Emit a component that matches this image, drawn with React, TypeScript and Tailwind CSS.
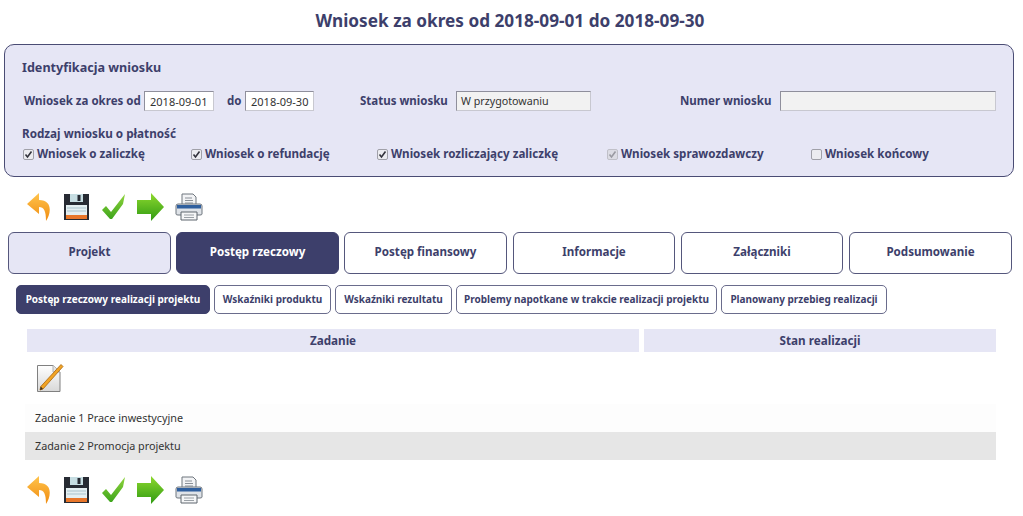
import React from "react";

function BackIcon() {
  return (
    <svg width="26" height="30" viewBox="0 0 26 30">
      <defs>
        <linearGradient id="bk" x1="0" y1="0" x2="0" y2="1">
          <stop offset="0" stopColor="#ffc44d" />
          <stop offset="1" stopColor="#f08c10" />
        </linearGradient>
      </defs>
      <path d="M13 1 L1 12 L13 22 L13 15 C18 15 20 19 20 29 C25 22 27 8 13 8 Z" fill="url(#bk)" />
    </svg>
  );
}
function SaveIcon() {
  return (
    <svg width="27" height="28" viewBox="0 0 27 28">
      <path d="M1 1 H26 V27 H1 Z" fill="#272b33" />
      <rect x="7" y="1" width="13" height="8" fill="#c6dde2" />
      <rect x="14.5" y="2" width="3" height="6" fill="#272b33" />
      <rect x="3" y="12" width="21" height="10" fill="#e4eff2" />
      <path d="M4 15 H23 M4 18 H23" stroke="#a9c3cc" strokeWidth="1" />
      <rect x="3" y="22" width="21" height="4" fill="#e8762a" />
    </svg>
  );
}
function CheckIcon() {
  return (
    <svg width="24" height="26" viewBox="0 0 24 26">
      <defs>
        <linearGradient id="ck" x1="0" y1="0" x2="0" y2="1">
          <stop offset="0" stopColor="#8fd43c" />
          <stop offset="1" stopColor="#3ea51c" />
        </linearGradient>
      </defs>
      <path d="M0 16 L4 12 L9 18 L23 0 L21 10 L10 25 L8 25 Z" fill="url(#ck)" />
    </svg>
  );
}
function NextIcon() {
  return (
    <svg width="29" height="29" viewBox="0 0 29 29">
      <defs>
        <linearGradient id="nx" x1="0" y1="0" x2="0" y2="1">
          <stop offset="0" stopColor="#8ed92f" />
          <stop offset="1" stopColor="#2f9a12" />
        </linearGradient>
      </defs>
      <path d="M1 7 H15 V0 L28 14 L15 28 V21 H1 Z" fill="url(#nx)" />
    </svg>
  );
}
function PrintIcon() {
  return (
    <svg width="28" height="28" viewBox="0 0 28 28">
      <path d="M7 1 H18 L21 4 V13 H7 Z" fill="#f2f3f5" stroke="#6f767e" />
      <path d="M10 5 H17 M10 7.5 H18 M10 10 H18" stroke="#8a9098" />
      <path d="M3 11 H25 Q27 11 27 13 V21 Q27 22 25 22 H3 Q1 22 1 21 V13 Q1 11 3 11 Z" fill="#dfe3e8" stroke="#6f767e" />
      <rect x="2" y="12" width="24" height="3.5" fill="#2f5f9e" />
      <path d="M6 19 H22 V27 H6 Z" fill="#f5f6f7" stroke="#5f666e" />
      <path d="M9 22 H19 M9 24.5 H19" stroke="#9aa0a6" />
    </svg>
  );
}
function Toolbar({ className }: { className: string }) {
  return (
    <div className={"flex items-center h-[30px] " + className}>
      <div className="w-[36px]"><BackIcon /></div>
      <div className="w-[40px] pl-px"><SaveIcon /></div>
      <div className="w-[34px]"><CheckIcon /></div>
      <div className="w-[39px]"><NextIcon /></div>
      <PrintIcon />
    </div>
  );
}
function PencilIcon() {
  return (
    <svg width="28" height="29" viewBox="0 0 28 29">
      <defs>
        <linearGradient id="pg" x1="0" y1="0" x2="0" y2="1">
          <stop offset="0" stopColor="#ffffff" />
          <stop offset="1" stopColor="#d8d8d8" />
        </linearGradient>
      </defs>
      <path d="M1.5 1.5 H17 L24 8 V27.5 H1.5 Z" fill="url(#pg)" stroke="#808080" />
      <path d="M17 1.5 V8 H24" fill="#e6e6e6" stroke="#b0b0b0" />
      <path d="M25 0.5 L27 2.5 L7 25 L4 26 L4.8 22.5 Z" fill="#f2a424" stroke="#a8640c" strokeWidth="0.8" />
      <path d="M4 26 L4.8 22.5 L7 25 Z" fill="#3a3026" />
    </svg>
  );
}
function Check({ label, checked, disabled, className }: { label: string; checked?: boolean; disabled?: boolean; className: string }) {
  return (
    <label className={"flex items-center font-bold " + className}>
      <span className={"flex items-center justify-center w-[11px] h-[11px] mr-[3px] rounded-[2px] border " + (disabled ? "border-[#c0c0c8] bg-[#dcdce4]" : "border-[#a0a0a8] bg-[#ececf0]")}>
        {checked && (
          <svg width="9" height="9" viewBox="0 0 9 9">
            <path d="M1.5 4.5 L3.5 7 L7.5 1.5" fill="none" stroke={disabled ? "#9a9aa2" : "#33333c"} strokeWidth="1.6" />
          </svg>
        )}
      </span>
      {label}
    </label>
  );
}
function Field({ value, className, gray }: { value: string; className: string; gray?: boolean }) {
  return (
    <div className={"h-[20px] border border-t-[#8f8f9c] border-l-[#8f8f9c] border-r-[#c8c8d0] border-b-[#c8c8d0] font-normal text-[#333] flex items-center leading-none whitespace-nowrap " + (gray ? "bg-[#f2f2f2] " : "bg-white ") + className}>
      {value}
    </div>
  );
}
const tabs = ["Projekt", "Postęp rzeczowy", "Postęp finansowy", "Informacje", "Załączniki", "Podsumowanie"];
const tabCls = [
  "w-[163px] bg-[#e6e6f5] text-[#3d3f6b] border-[#55577c] mr-[5px]",
  "w-[163px] bg-[#3d3f6b] text-white border-[#3d3f6b] mr-[5px]",
  "w-[163px] bg-white text-[#3d3f6b] border-[#55577c] mr-[6px]",
  "w-[162px] bg-white text-[#3d3f6b] border-[#55577c] mr-[6px]",
  "w-[162px] bg-white text-[#3d3f6b] border-[#55577c] mr-[6px]",
  "w-[163px] bg-white text-[#3d3f6b] border-[#55577c]",
];
const subs = [
  { t: "Postęp rzeczowy realizacji projektu", c: "w-[194px] bg-[#3d3f6b] text-white border-[#3d3f6b]" },
  { t: "Wskaźniki produktu", c: "w-[117px] bg-white text-[#3d3f6b] border-[#6a6c8c]" },
  { t: "Wskaźniki rezultatu", c: "w-[117px] bg-white text-[#3d3f6b] border-[#6a6c8c]" },
  { t: "Problemy napotkane w trakcie realizacji projektu", c: "w-[261px] bg-white text-[#3d3f6b] border-[#6a6c8c]" },
  { t: "Planowany przebieg realizacji", c: "w-[166px] bg-white text-[#3d3f6b] border-[#6a6c8c]" },
];

export default function App() {
  return (
    <div className="w-[1023px] h-[516px] bg-white overflow-hidden text-[#3d3f6b] text-[12px] font-['Noto_Sans',sans-serif]">
      <h1 className="h-[43px] pt-[9px] text-center text-[17.2px] leading-[24px] font-bold pr-[3px]">
        Wniosek za okres od 2018-09-01 do 2018-09-30
      </h1>
      <div className="ml-[4px] mt-px w-[1010px] h-[133px] rounded-[10px] border border-[#4a4c74] bg-[#e6e6f5] pl-[17px]">
        <div className="pt-[14px] h-[34px] text-[12.6px] leading-[18px] font-bold">Identyfikacja wniosku</div>
        <div className="flex items-center h-[20px] mt-[12px] font-bold text-[11.5px]">
          <span className="w-[122px] pl-[2px] whitespace-nowrap">Wniosek za okres od</span>
          <Field value="2018-09-01" className="w-[70px] pl-[5px] text-[11px]" />
          <span className="w-[31px] pl-[13px]">do</span>
          <Field value="2018-09-30" className="w-[69px] pl-[5px] text-[11px]" />
          <span className="w-[142px] pl-[46px] whitespace-nowrap">Status wniosku</span>
          <Field value="W przygotowaniu" className="w-[135px] pl-[4px] text-[10.7px]" gray />
          <span className="w-[189px] pl-[89px] whitespace-nowrap">Numer wniosku</span>
          <Field value="" className="w-[216px]" gray />
        </div>
        <div className="mt-[13px] h-[18px] leading-[18px] font-bold text-[11.7px]">Rodzaj wniosku o płatność</div>
        <div className="flex h-[18px] mt-[3px] text-[11.6px] whitespace-nowrap">
          <Check label="Wniosek o zaliczkę" checked className="w-[169px] pl-px" />
          <Check label="Wniosek o refundację" checked className="w-[186px]" />
          <Check label="Wniosek rozliczający zaliczkę" checked className="w-[230px]" />
          <Check label="Wniosek sprawozdawczy" checked disabled className="w-[204px]" />
          <Check label="Wniosek końcowy" className="w-[150px]" />
        </div>
      </div>
      <Toolbar className="ml-[26px] mt-[15px]" />
      <div className="flex ml-[8px] mt-[10px]">
        {tabs.map((t, i) => (
          <div key={t} className={"h-[42px] rounded-[6px] border flex items-center justify-center text-[11.6px] font-bold pb-[3px] " + tabCls[i]}>
            {t}
          </div>
        ))}
      </div>
      <div className="flex gap-[4px] ml-[16px] mt-[11px]">
        {subs.map((s) => (
          <div key={s.t} className={"h-[29px] rounded-[5px] border flex items-center justify-center text-[10px] font-bold whitespace-nowrap " + s.c}>
            {s.t}
          </div>
        ))}
      </div>
      <div className="flex ml-[27px] mt-[15px] gap-[5px] h-[23px] text-[11.7px] font-bold">
        <div className="w-[612px] bg-[#e6e6f5] flex items-center justify-center">Zadanie</div>
        <div className="w-[352px] bg-[#e6e6f5] flex items-center justify-center">Stan realizacji</div>
      </div>
      <div className="ml-[36px] mt-[12px] h-[40px]"><PencilIcon /></div>
      <div className="ml-[25px] w-[971px] text-[10.8px] text-[#333]">
        <div className="h-[28px] bg-[#fdfdfd] flex items-center pl-[10px]">Zadanie 1 Prace inwestycyjne</div>
        <div className="h-[28px] bg-[#e6e6e6] flex items-center pl-[10px]">Zadanie 2 Promocja projektu</div>
      </div>
      <Toolbar className="ml-[26px] mt-[15px]" />
    </div>
  );
}
